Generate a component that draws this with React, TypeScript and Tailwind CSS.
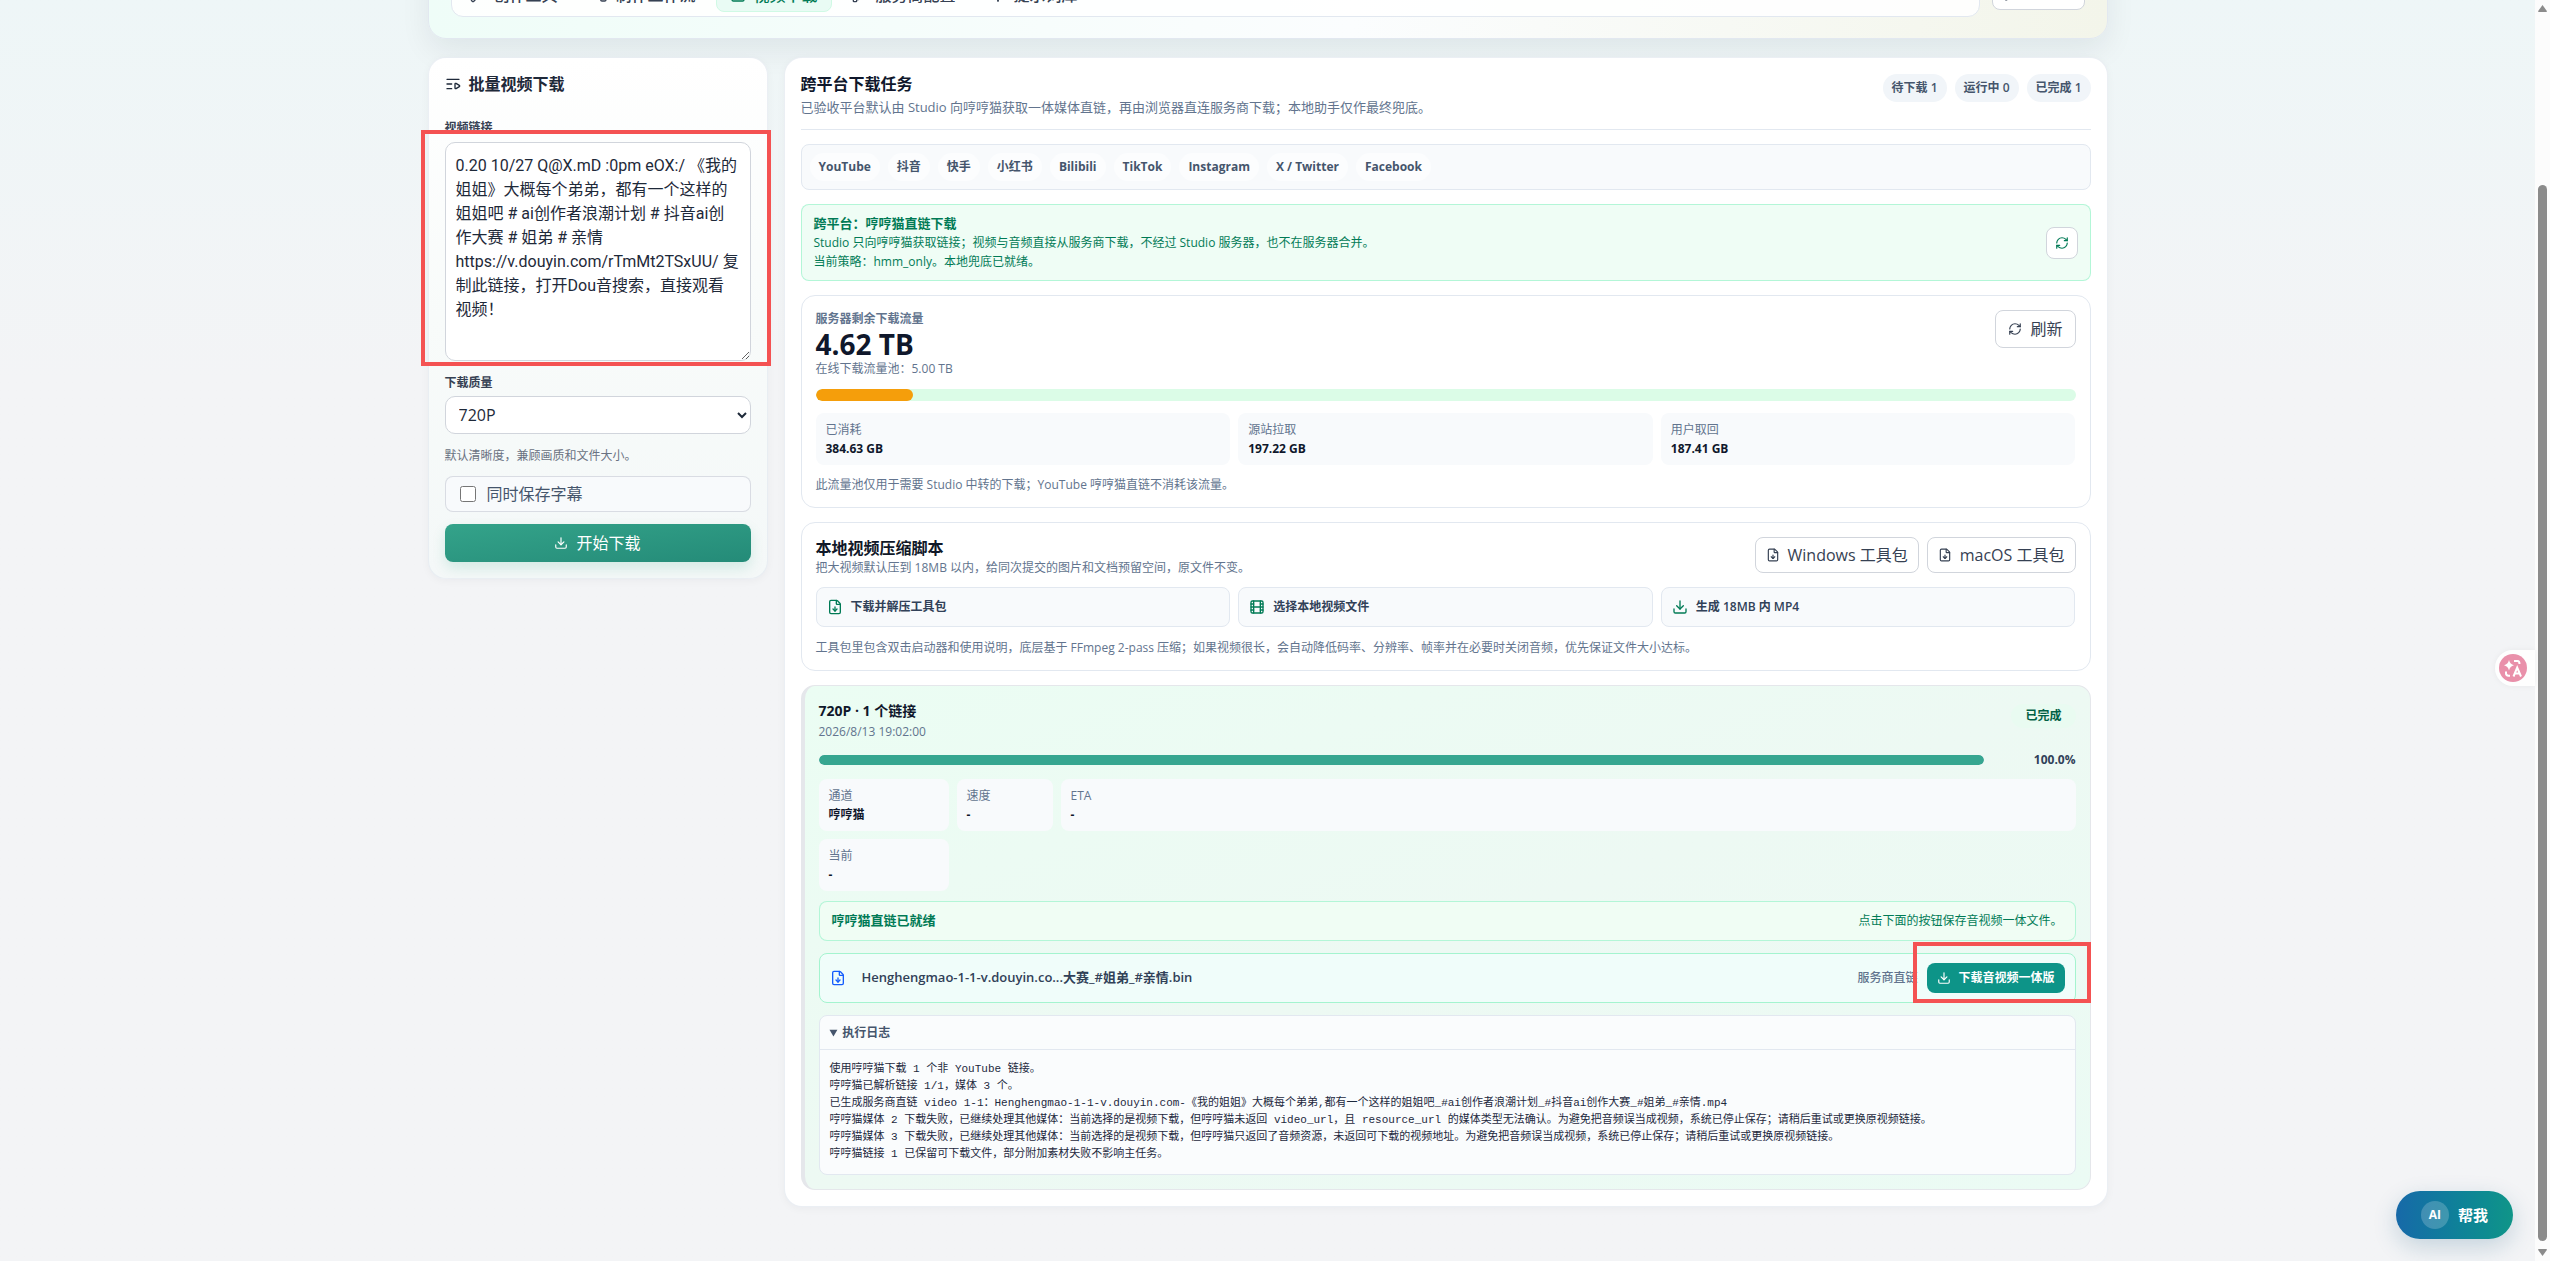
import type { ReactNode } from "react";
import {
  BookOpen,
  Download,
  FileDown,
  Film,
  KeyRound,
  ListVideo,
  RefreshCw,
  SquarePlay,
  WandSparkles,
  Workflow,
} from "lucide-react";

const navItems = [
  { label: "创作工具", icon: WandSparkles },
  { label: "制作工作流", icon: Workflow },
  { label: "视频下载", icon: SquarePlay, active: true },
  { label: "服务商配置", icon: KeyRound },
  { label: "提示词库", icon: BookOpen },
];

const counters = ["待下载 1", "运行中 0", "已完成 1"];

const platforms = ["YouTube", "抖音", "快手", "小红书", "Bilibili", "TikTok", "Instagram", "X / Twitter", "Facebook"];

const traffic = [
  { label: "已消耗", value: "384.63 GB" },
  { label: "源站拉取", value: "197.22 GB" },
  { label: "用户取回", value: "187.41 GB" },
];

const steps = [
  { label: "下载并解压工具包", icon: FileDown },
  { label: "选择本地视频文件", icon: Film },
  { label: "生成 18MB 内 MP4", icon: Download },
];

const taskMetrics = [
  { label: "通道", value: "哼哼猫" },
  { label: "速度", value: "-" },
  { label: "ETA", value: "-" },
  { label: "当前", value: "-" },
];

const logLines = [
  "使用哼哼猫下载 1 个非 YouTube 链接。",
  "哼哼猫已解析链接 1/1，媒体 3 个。",
  "已生成服务商直链 video 1-1：Henghengmao-1-1-v.douyin.com-《我的姐姐》大概每个弟弟,都有一个这样的姐姐吧_#ai创作者浪潮计划_#抖音ai创作大赛_#姐弟_#亲情.mp4",
  "哼哼猫媒体 2 下载失败，已继续处理其他媒体：当前选择的是视频下载，但哼哼猫未返回 video_url，且 resource_url 的媒体类型无法确认。为避免把音频误当成视频，系统已停止保存；请稍后重试或更换原视频链接。",
  "哼哼猫媒体 3 下载失败，已继续处理其他媒体：当前选择的是视频下载，但哼哼猫只返回了音频资源，未返回可下载的视频地址。为避免把音频误当成视频，系统已停止保存；请稍后重试或更换原视频链接。",
  "哼哼猫链接 1 已保留可下载文件，部分附加素材失败不影响主任务。",
];

const shareText = [
  "0.20 10/27 Q@X.mD :0pm eOX:/ 《我的",
  "姐姐》大概每个弟弟，都有一个这样的",
  "姐姐吧 # ai创作者浪潮计划 # 抖音ai创",
  "作大赛 # 姐弟 # 亲情",
  "https://v.douyin.com/rTmMt2TSxUU/ 复",
  "制此链接，打开Dou音搜索，直接观看",
  "视频！",
].join("\n");

function OutlineButton({ icon, children, className }: { icon: ReactNode; children: ReactNode; className: string }) {
  return (
    <button
      className={`flex shrink-0 items-center gap-2 rounded-lg border border-gray-300 bg-white text-base text-gray-700 ${className}`}
    >
      {icon}
      {children}
    </button>
  );
}

function Metric({ label, value }: { label: string; value: string }) {
  return (
    <div className="rounded-lg bg-slate-50 px-[10px] py-[7px] text-xs leading-[19px]">
      <div className="text-slate-500">{label}</div>
      <div className="font-bold text-slate-900">{value}</div>
    </div>
  );
}

function Header() {
  return (
    <header className="-mt-[60px] flex items-end gap-3 rounded-[18px] border border-slate-200 bg-linear-to-r from-[#effdf8] via-[#fbfdfe] via-55% to-[#f3f5ea] px-[22px] pt-8 pb-[21px] shadow-[0_12px_30px_rgba(15,23,42,0.07)]">
      <nav className="flex flex-1 gap-[6px] rounded-xl border border-slate-200 bg-white/90 p-1">
        {navItems.map(({ label, icon: Icon, active }) => (
          <a
            key={label}
            href="#"
            className={`flex h-[34px] items-center gap-2 rounded-lg border px-[13px] text-base font-medium ${
              active ? "border-emerald-100 bg-[#e9fbf4] text-emerald-700" : "border-transparent text-gray-700"
            }`}
          >
            <Icon size={16} />
            {label}
          </a>
        ))}
      </nav>
      <button className="mb-[7px] flex h-[30px] items-center gap-2 rounded-lg border border-gray-300 bg-white px-[11px] text-xs text-gray-700">
        <KeyRound size={12} />
        管理授权
      </button>
    </header>
  );
}

function DownloadForm() {
  return (
    <form className="relative flex w-[340px] shrink-0 flex-col self-start rounded-[18px] border border-slate-200/70 bg-linear-to-b from-white via-[#f8fbfa] to-[#f4f8f8] px-4 pt-[14px] pb-4 shadow-[0_2px_8px_rgba(15,23,42,0.04)]">
      <h2 className="flex h-6 items-center gap-2 text-base font-bold text-gray-800">
        <ListVideo size={16} />
        批量视频下载
      </h2>

      <label htmlFor="links" className="mt-[22px] text-xs leading-5 font-semibold text-gray-700">
        视频链接
      </label>
      <textarea
        id="links"
        defaultValue={shareText}
        className="mt-1 h-[219px] w-full resize-y overflow-hidden rounded-[10px] border border-gray-300 bg-white py-[11px] pr-1 pl-[10px] font-['Roboto','Noto_Sans_CJK_SC',sans-serif] text-base leading-6 text-gray-800"
      />

      <label htmlFor="quality" className="mt-3 text-xs leading-5 font-semibold text-gray-700">
        下载质量
      </label>
      <select
        id="quality"
        className="mt-[3px] h-[38px] w-full rounded-[10px] border border-gray-300 bg-white px-[9px] text-base text-gray-800"
      >
        <option>720P</option>
      </select>
      <p className="mt-3 text-xs leading-5 text-gray-500">默认清晰度，兼顾画质和文件大小。</p>

      <label className="mt-[10px] flex h-9 items-center gap-[11px] rounded-lg border border-gray-300/80 bg-slate-50 px-[14px] text-base text-slate-600">
        <input type="checkbox" className="size-4" />
        同时保存字幕
      </label>
      <button
        type="button"
        className="mt-3 flex h-[38px] items-center justify-center gap-2 rounded-lg bg-linear-to-br from-[#34a38a] to-[#248b78] text-base text-white shadow-[0_6px_14px_rgba(5,150,105,0.14)]"
      >
        <Download size={14} />
        开始下载
      </button>

      {/* Highlight around the link box */}
      <div className="pointer-events-none absolute top-[72px] -right-1 -left-2 h-[236px] border-4 border-[#f45252]" />
    </form>
  );
}

function TrafficCard() {
  return (
    <section className="rounded-[14px] border border-slate-200 bg-white px-[14px] pt-[14px] pb-[13px]">
      <div className="flex items-start justify-between">
        <div>
          <div className="text-xs leading-[18px] font-semibold text-slate-500">服务器剩余下载流量</div>
          <div className="text-[28px] leading-8 font-bold text-slate-900">4.62 TB</div>
          <div className="text-xs leading-[18px] text-slate-500">在线下载流量池：5.00 TB</div>
        </div>
        <OutlineButton className="h-[38px] px-3" icon={<RefreshCw size={14} />}>
          刷新
        </OutlineButton>
      </div>
      <div className="mt-[11px] h-3 overflow-hidden rounded-full bg-green-100">
        <div className="h-full rounded-full bg-[#f59e0b]" style={{ width: "7.7%" }} />
      </div>
      <div className="mt-3 grid grid-cols-3 gap-2">
        {traffic.map((t) => (
          <Metric key={t.label} {...t} />
        ))}
      </div>
      <p className="mt-[11px] text-xs leading-[18px] text-slate-500">
        此流量池仅用于需要 Studio 中转的下载；YouTube 哼哼猫直链不消耗该流量。
      </p>
    </section>
  );
}

function ToolkitCard() {
  return (
    <section className="rounded-[14px] border border-slate-200 bg-white px-[14px] pt-[14px] pb-[13px]">
      <div className="flex items-start justify-between">
        <div>
          <h3 className="text-base leading-[22px] font-semibold text-gray-900">本地视频压缩脚本</h3>
          <p className="text-xs leading-[18px] text-slate-500">
            把大视频默认压到 18MB 以内，给同次提交的图片和文档预留空间，原文件不变。
          </p>
        </div>
        <div className="flex gap-2">
          <OutlineButton className="h-9 px-[10px]" icon={<FileDown size={14} />}>
            Windows 工具包
          </OutlineButton>
          <OutlineButton className="h-9 px-[10px]" icon={<FileDown size={14} />}>
            macOS 工具包
          </OutlineButton>
        </div>
      </div>
      <div className="mt-[10px] grid grid-cols-3 gap-2">
        {steps.map(({ label, icon: Icon }) => (
          <div
            key={label}
            className="flex h-10 items-center gap-2 rounded-lg border border-slate-200 bg-slate-50 px-[10px] text-xs font-semibold text-slate-700"
          >
            <Icon size={16} className="text-emerald-700" />
            {label}
          </div>
        ))}
      </div>
      <p className="mt-3 text-xs leading-[18px] text-slate-500">
        工具包里包含双击启动器和使用说明，底层基于 FFmpeg 2-pass 压缩；如果视频很长，会自动降低码率、分辨率、帧率并在必要时关闭音频，优先保证文件大小达标。
      </p>
    </section>
  );
}

function TaskCard() {
  return (
    <section className="rounded-[14px] border border-l-4 border-gray-200 bg-linear-to-br from-[#ebfdf3] via-[#edf9f3] to-[#ebfbf4] p-[14px]">
      <div className="flex items-start justify-between">
        <div>
          <h3 className="text-sm leading-[22px] font-bold text-slate-900">720P · 1 个链接</h3>
          <time className="block text-xs leading-5 text-slate-500">2026/8/13 19:02:00</time>
        </div>
        <span className="mt-1 rounded-full bg-[#e9fbf1] px-[14px] text-xs leading-6 font-semibold text-emerald-800">
          已完成
        </span>
      </div>

      <div className="mt-2 flex h-5 items-center">
        <div className="h-[10px] flex-1 overflow-hidden rounded-full bg-slate-200">
          <div className="h-full rounded-full bg-[#36a690]" style={{ width: "100%" }} />
        </div>
        <span className="w-[92px] text-right text-xs font-bold text-slate-700">100.0%</span>
      </div>

      <div className="mt-[9px] grid grid-cols-[130px_96px_1fr] gap-2">
        {taskMetrics.map((m) => (
          <Metric key={m.label} {...m} />
        ))}
      </div>

      <div className="mt-[10px] flex h-10 items-center justify-between rounded-lg border border-emerald-200/80 bg-[#f0fdf4] px-3">
        <strong className="text-[13px] font-bold text-emerald-700">哼哼猫直链已就绪</strong>
        <span className="text-xs text-emerald-700">点击下面的按钮保存音视频一体文件。</span>
      </div>

      <div className="relative mt-3 flex h-[50px] items-center rounded-lg border border-emerald-200 bg-[#f0fdfa] px-[10px]">
        <FileDown size={16} className="mr-4 text-blue-600" />
        <span className="flex-1 text-[13px] font-semibold text-slate-700">
          Henghengmao-1-1-v.douyin.co...大赛_#姐弟_#亲情.bin
        </span>
        <span className="mr-[10px] text-xs font-medium text-slate-500">服务商直链</span>
        <button className="flex h-[30px] items-center gap-[7px] rounded-lg bg-[#0d9488] px-[10px] text-xs font-bold text-white">
          <Download size={14} />
          下载音视频一体版
        </button>
        {/* Highlight around the save button */}
        <div className="pointer-events-none absolute -top-3 -right-4 -bottom-px w-[178px] border-4 border-[#f45252]" />
      </div>

      <details open className="mt-3 rounded-lg border border-slate-200 bg-[#fafcfd]">
        <summary className="h-[34px] border-b border-slate-200 px-[10px] text-xs leading-[34px] font-semibold text-slate-600">
          执行日志
        </summary>
        <div className="px-[10px] py-[11px] font-['Liberation_Mono','Noto_Sans_CJK_SC',monospace] text-[11px] leading-[17px] text-slate-800">
          {logLines.map((line) => (
            <p key={line}>{line}</p>
          ))}
        </div>
      </details>
    </section>
  );
}

function TaskPanel() {
  return (
    <main className="flex min-w-0 flex-1 flex-col gap-[14px] rounded-[18px] border border-slate-200/70 bg-white px-4 pt-[14px] pb-4 shadow-[0_2px_8px_rgba(15,23,42,0.04)]">
      <div className="flex h-[58px] items-start justify-between border-b border-slate-200">
        <div>
          <h2 className="text-base leading-6 font-bold text-slate-900">跨平台下载任务</h2>
          <p className="text-[13px] leading-[22px] text-slate-500">
            已验收平台默认由 Studio 向哼哼猫获取一体媒体直链，再由浏览器直连服务商下载；本地助手仅作最终兜底。
          </p>
        </div>
        <div className="mt-0.5 flex gap-2">
          {counters.map((c) => (
            <span key={c} className="rounded-full bg-slate-100 px-[9px] text-xs leading-7 font-semibold text-slate-600">
              {c}
            </span>
          ))}
        </div>
      </div>

      <div className="flex gap-2 rounded-lg border border-slate-200 bg-slate-50 p-2">
        {platforms.map((p) => (
          <span key={p} className="rounded-full bg-[#fcfdfe] px-[9px] text-xs leading-7 font-bold text-slate-600">
            {p}
          </span>
        ))}
      </div>

      <div className="flex items-center justify-between rounded-lg border border-emerald-200/80 bg-[#effdf5] px-3 py-[9px] text-xs leading-[19px] text-emerald-700">
        <div>
          <strong className="block text-[13px] font-bold">跨平台：哼哼猫直链下载</strong>
          <p>Studio 只向哼哼猫获取链接；视频与音频直接从服务商下载，不经过 Studio 服务器，也不在服务器合并。</p>
          <p>当前策略：hmm_only。本地兜底已就绪。</p>
        </div>
        <button
          aria-label="刷新状态"
          className="flex size-8 items-center justify-center rounded-lg border border-gray-300 bg-white"
        >
          <RefreshCw size={14} />
        </button>
      </div>

      <TrafficCard />
      <ToolkitCard />
      <TaskCard />
    </main>
  );
}

function Scrollbar() {
  return (
    <div className="flex w-[15px] shrink-0 flex-col items-center bg-[#fcfcfc] py-[5px]">
      <svg width="9" height="7" viewBox="0 0 9 7" fill="#8b8b8b">
        <path d="M4.5 0 9 6.2Q9 7 8 7H1Q0 7 0 6.2Z" />
      </svg>
      <div className="mt-[173px] mb-2 w-[9px] flex-1 rounded-full bg-[#8b8b8b]" />
      <svg width="9" height="7" viewBox="0 0 9 7" fill="#8b8b8b">
        <path d="M4.5 7 0 .8Q0 0 1 0H8Q9 0 9 .8Z" />
      </svg>
    </div>
  );
}

export default function App() {
  return (
    <div className="flex h-screen overflow-hidden bg-[#f3f4f6] font-['Open_Sans','Noto_Sans_CJK_SC',sans-serif]">
      <div className="relative min-w-0 flex-1 bg-linear-to-b from-[#eef6f7] to-[#f3f4f6] to-30%">
        <div className="mx-auto flex max-w-[1680px] flex-col gap-[18px]">
          <Header />
          <div className="flex gap-4">
            <DownloadForm />
            <TaskPanel />
          </div>
        </div>

        {/* Translate widget */}
        <button
          aria-label="翻译"
          className="absolute top-[650px] right-0 flex h-9 w-10 items-center rounded-l-full bg-white/90 pl-1 shadow-[0_0_6px_rgba(15,23,42,0.05)]"
        >
          <svg width="28" height="28" viewBox="0 0 28 28" fill="none">
            <circle cx="14" cy="14" r="14" fill="#e990aa" />
            <path d="M10 6q1 4.2 5 5.200-4 1-5 5.200-1-4.200-5-5.200 4-1 5-5.200Z" fill="#fff" />
            <path d="M15 7h3.500q2 0 2 3M7 17.500v2q0 2 2.500 2.200h1.500" stroke="#fff" strokeWidth="2" />
            <path d="m14.500 22.500 3.700-9 3.800 9M16 19.500h4.500" stroke="#fff" strokeWidth="2" />
          </svg>
        </button>

        <button className="absolute right-[22px] bottom-[22px] flex h-12 items-center gap-[9px] rounded-full bg-linear-to-r from-[#1769a8] to-[#109588] px-[25px] text-[15px] font-bold text-white shadow-[0_8px_24px_rgba(15,80,120,0.2)]">
          <span className="flex size-7 items-center justify-center rounded-full bg-white/20 text-xs">AI</span>
          帮我
        </button>
      </div>
      <Scrollbar />
    </div>
  );
}
